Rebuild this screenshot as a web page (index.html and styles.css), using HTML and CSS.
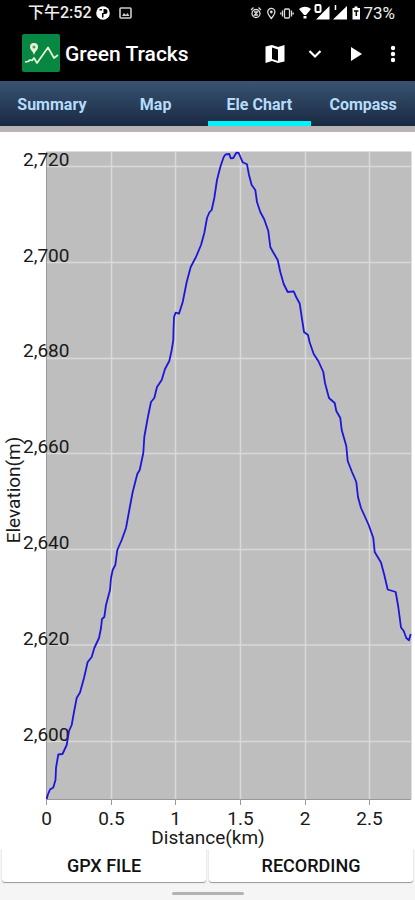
FILE: index.html
```html
<!DOCTYPE html>
<html lang="en">
<head>
<meta charset="utf-8">
<meta name="viewport" content="width=device-width, initial-scale=1">
<title>Green Tracks</title>
<link rel="stylesheet" href="styles.css">
</head>
<body>
<div class="status">
  <span class="clock">下午2:52</span>
  <svg class="status-left" width="40" height="16" viewBox="0 0 40 16" aria-hidden="true">
    <circle cx="8" cy="8" r="6.800" fill="#fff"/>
    <path d="M4.500 4H7v1.500H4.500zM8.500 4H10a2.500 2.500 0 0 1 0 5H8.500v3.500H7V8h1.500z" fill="#000"/>
    <rect x="25" y="3" width="11" height="10" rx="1" fill="none" stroke="#ccc" stroke-width="1.600"/>
    <path d="M27 11l2-3 2 2 1.500-2 2 3z" fill="#ccc"/>
  </svg>
  <svg class="status-right" width="114" height="20" viewBox="250 3 114 20" aria-hidden="true">
    <g fill="none" stroke="#ddd" stroke-width="1.300">
      <circle cx="257" cy="13.500" r="4"/>
      <path d="M252 10l2.500-2.500M262 10l-2.500-2.500M255 12h3.500l-3 3H259"/>
      <path d="M272.300 18.500c-2-2.500-3.600-4.500-3.600-6.500a3.600 3.600 0 0 1 7.200 0c0 2-1.600 4-3.600 6.500z"/>
      <rect x="285.500" y="9" width="5" height="9" rx="1"/>
      <path d="M283.500 10.500v6M292.500 10.500v6M281.800 12.500v2M294.200 12.500v2"/>
    </g>
    <circle cx="272.300" cy="12" r="1.400" fill="#ddd"/>
    <g fill="#fff">
      <path d="M300 9q6-4.500 12 0l-5 6h-2zM304.500 16h3v2.500h-3z"/>
      <path d="M330.500 6v13.500H317zM348 6v13.500h-14z"/>
      <path d="M353.500 8h2V6.500h3V8h2.500v11.500h-7.500z"/>
    </g>
    <rect x="316.500" y="5" width="5" height="7" rx="1" fill="#000" stroke="#fff" stroke-width="2"/>
    <path d="M336.500 5v5" stroke="#fff" stroke-width="1.500"/>
    <path d="M355 11h4.500M357.300 11v5" stroke="#000" stroke-width="1.500"/>
  </svg>
  <span class="battery">73%</span>
</div>
<header class="appbar">
  <svg class="logo" width="38" height="38" viewBox="0 0 38 38" aria-hidden="true">
    <rect width="38" height="38" rx="2" fill="#088742"/>
    <path d="M3 28l3-.5 2-1.500 2 .5 2-2.500 3 5 11-15.500 6 10.500 4-3" fill="none" stroke="#e9f5d9" stroke-width="1.700" stroke-linejoin="round"/>
    <path d="M12 21c-1-4-4-5-4-8a4 4 0 0 1 8 0c0 3-3 4-4 8z" fill="#e9f5d9"/>
    <circle cx="12" cy="13" r="1.500" fill="#4d9d58"/>
  </svg>
  <h1>Green Tracks</h1>
  <div class="actions">
    <button type="button" aria-label="Map">
      <svg width="20" height="20" viewBox="0 0 20 20"><path d="M.5 2.500L7 1l6 2 6.500-2v16.500L13 19l-6-2-6.500 2z" fill="#fff"/><path d="M7 3.500l6 2V17l-6-2z" fill="#000"/></svg>
    </button>
    <button type="button" aria-label="Expand">
      <svg width="14" height="10" viewBox="0 0 14 10"><path d="M1.500 2L7 7.500 12.500 2" fill="none" stroke="#fff" stroke-width="2.200"/></svg>
    </button>
    <button type="button" aria-label="Play">
      <svg width="14" height="16" viewBox="0 0 14 16"><path d="M2 1v14l11-7z" fill="#fff"/></svg>
    </button>
    <button type="button" aria-label="More">
      <svg width="6" height="20" viewBox="0 0 6 20"><g fill="#fff"><circle cx="3" cy="4" r="2.200"/><circle cx="3" cy="10" r="2.200"/><circle cx="3" cy="16" r="2.200"/></g></svg>
    </button>
  </div>
</header>
<nav class="tabs">
  <a href="#summary">Summary</a>
  <a href="#map">Map</a>
  <a href="#chart" class="active" aria-current="page">Ele Chart</a>
  <a href="#compass">Compass</a>
</nav>
<main id="chart">
  <svg class="chart" viewBox="0 132 415 717" role="img" aria-label="Elevation by distance">
    <rect x="46.500" y="151.500" width="365" height="648" fill="#bebebe"/>
    <path class="grid" d="M111.500 152v648M175.500 152v648M240.500 152v648M305.500 152v648M369.500 152v648M47 166.500h364M47 262.500h364M47 358.500h364M47 453.500h364M47 549.500h364M47 645h364M47 741.500h364"/>
    <path class="axis" d="M46.500 152v653M46 799.500h365M111.500 800v5M175.500 800v5M240.500 800v5M305.500 800v5M369.500 800v5"/>
    <g class="label">
      <text x="23" y="166">2,720</text>
      <text x="23" y="262">2,700</text>
      <text x="23" y="357">2,680</text>
      <text x="23" y="453">2,660</text>
      <text x="23" y="549">2,640</text>
      <text x="23" y="645">2,620</text>
      <text x="23" y="741">2,600</text>
    </g>
    <polyline class="line" points="46.700,799 47.700,795 50,789.500 53.300,787.500 55.500,780 56,768 58.300,754.500 62.500,754 66.700,745 69,731 71.700,725 74,712 76.700,698 80,692.500 84,678 87.700,662 91.700,657 94.300,648 99,638 101,628 102,619 104.300,617 106,605 110,590 111,578 112.700,570 115.300,565 117.300,550 121.700,540 126,528 129.300,510 132.700,492 137.300,474 139.700,470 143.300,453 144.300,437 147.700,418 151,402 154.300,398 157,387 161.700,380 165,369 169.300,361 171.700,350 173.300,340 173.500,330 174,317 175.700,312.700 179,313.700 182.700,302 186.700,282 190.700,267 196,257 201,245 204.300,233 207,218 209.300,212.500 211.700,210 214.300,198 217,180 220.300,167 223.700,157 225.700,154.300 229.300,154 230.700,158.300 233.300,158 236.300,152.700 238.700,153 242.700,162.300 247,164.300 249,175 251.700,185 255.300,190 257,202 260.300,212 264.300,219.500 268.300,231 270.300,247 273,252 277.700,260 280.300,272 283.700,284 287.700,292 293.700,291.300 296.300,297.300 299.700,303.500 301.700,317 304,332 308,335 309.700,342.500 313.700,354 318.300,361 323.300,372 325,383 329,398 334.700,403 336.300,411 340.300,418 341.700,430 346.300,446 347.700,461 352,472 356.300,482 358,497 361,508 368.700,525 373.300,538 374.700,552 381,562.500 384.300,575 387.700,589.500 395.700,592 398.300,607 401,627.500 403.700,631 406.300,638 409,640.300 410.700,634"/>
    <g class="label mid">
      <text x="46.500" y="825">0</text>
      <text x="111.500" y="825">0.5</text>
      <text x="175.500" y="825">1</text>
      <text x="240.500" y="825">1.5</text>
      <text x="305" y="825">2</text>
      <text x="369.500" y="825">2.5</text>
      <text x="208" y="844">Distance(km)</text>
      <text transform="translate(20 490) rotate(-90)">Elevation(m)</text>
    </g>
  </svg>
</main>
<footer>
  <div class="buttons">
    <button type="button">GPX FILE</button>
    <button type="button">RECORDING</button>
  </div>
  <div class="handle"></div>
</footer>
</body>
</html>
```
FILE: styles.css
```css
* { box-sizing: border-box; }
body {
  margin: 0;
  min-height: 100vh;
  display: flex;
  flex-direction: column;
  background: #fff;
  color: #111;
  font-family: Roboto, "Noto Sans CJK SC", sans-serif;
}
button { border: 0; padding: 0; background: none; font: inherit; color: inherit; }
svg { display: block; flex: none; }
.status {
  display: flex;
  align-items: center;
  height: 26px;
  padding: 0 20px 0 28px;
  background: #000;
  color: #eee;
  line-height: 26px;
}
.status-left { margin-left: 3px; }
.status-right { margin-left: auto; }
.clock { font-size: 16px; font-weight: 500; }
.battery { font-size: 17px; }
.appbar {
  display: flex;
  align-items: center;
  height: 55px;
  padding: 0 19px 0 22px;
  background: #000;
  color: #fff;
}
.logo { margin-bottom: 2px; }
h1 { margin: 0 0 0 5px; font-size: 21px; font-weight: 500; line-height: 28px; }
.actions { display: flex; align-items: center; gap: 27px; margin-left: auto; }
.actions button { display: flex; justify-content: center; }
.actions button:first-child { margin-right: -4px; }
.tabs {
  display: grid;
  grid-template-columns: repeat(4, 1fr);
  height: 51px;
  border-bottom: 6px solid #b9b4b4;
  background: linear-gradient(#385472, #1b2942);
}
.tabs a {
  display: flex;
  align-items: center;
  justify-content: center;
  padding-top: 7px;
  border-bottom: 5px solid transparent;
  color: #b5dcfa;
  font-size: 16px;
  font-weight: 700;
  text-decoration: none;
}
.tabs .active { border-color: #00f3fa; }
.chart { width: 100%; height: auto; }
.grid { stroke: #d9d9d9; stroke-width: 1.5; }
.axis { stroke: #999; fill: none; }
.line { stroke: #1c16da; stroke-width: 1.8; stroke-linejoin: round; fill: none; }
.label { font-size: 19px; fill: #191919; }
.mid { text-anchor: middle; }
footer { flex: 1; background: #f5f5f5; }
.buttons { display: grid; grid-template-columns: 1fr 1fr; gap: 3px; padding: 0 2px; }
.buttons button {
  height: 33px;
  border-radius: 0 0 3px 3px;
  background: #fff;
  box-shadow: 0 1px 1px #999;
  font-size: 18px;
  font-weight: 500;
}
.handle { width: 72px; height: 3px; margin: 10px auto 0; border-radius: 2px; background: #b3b3b3; }
```
